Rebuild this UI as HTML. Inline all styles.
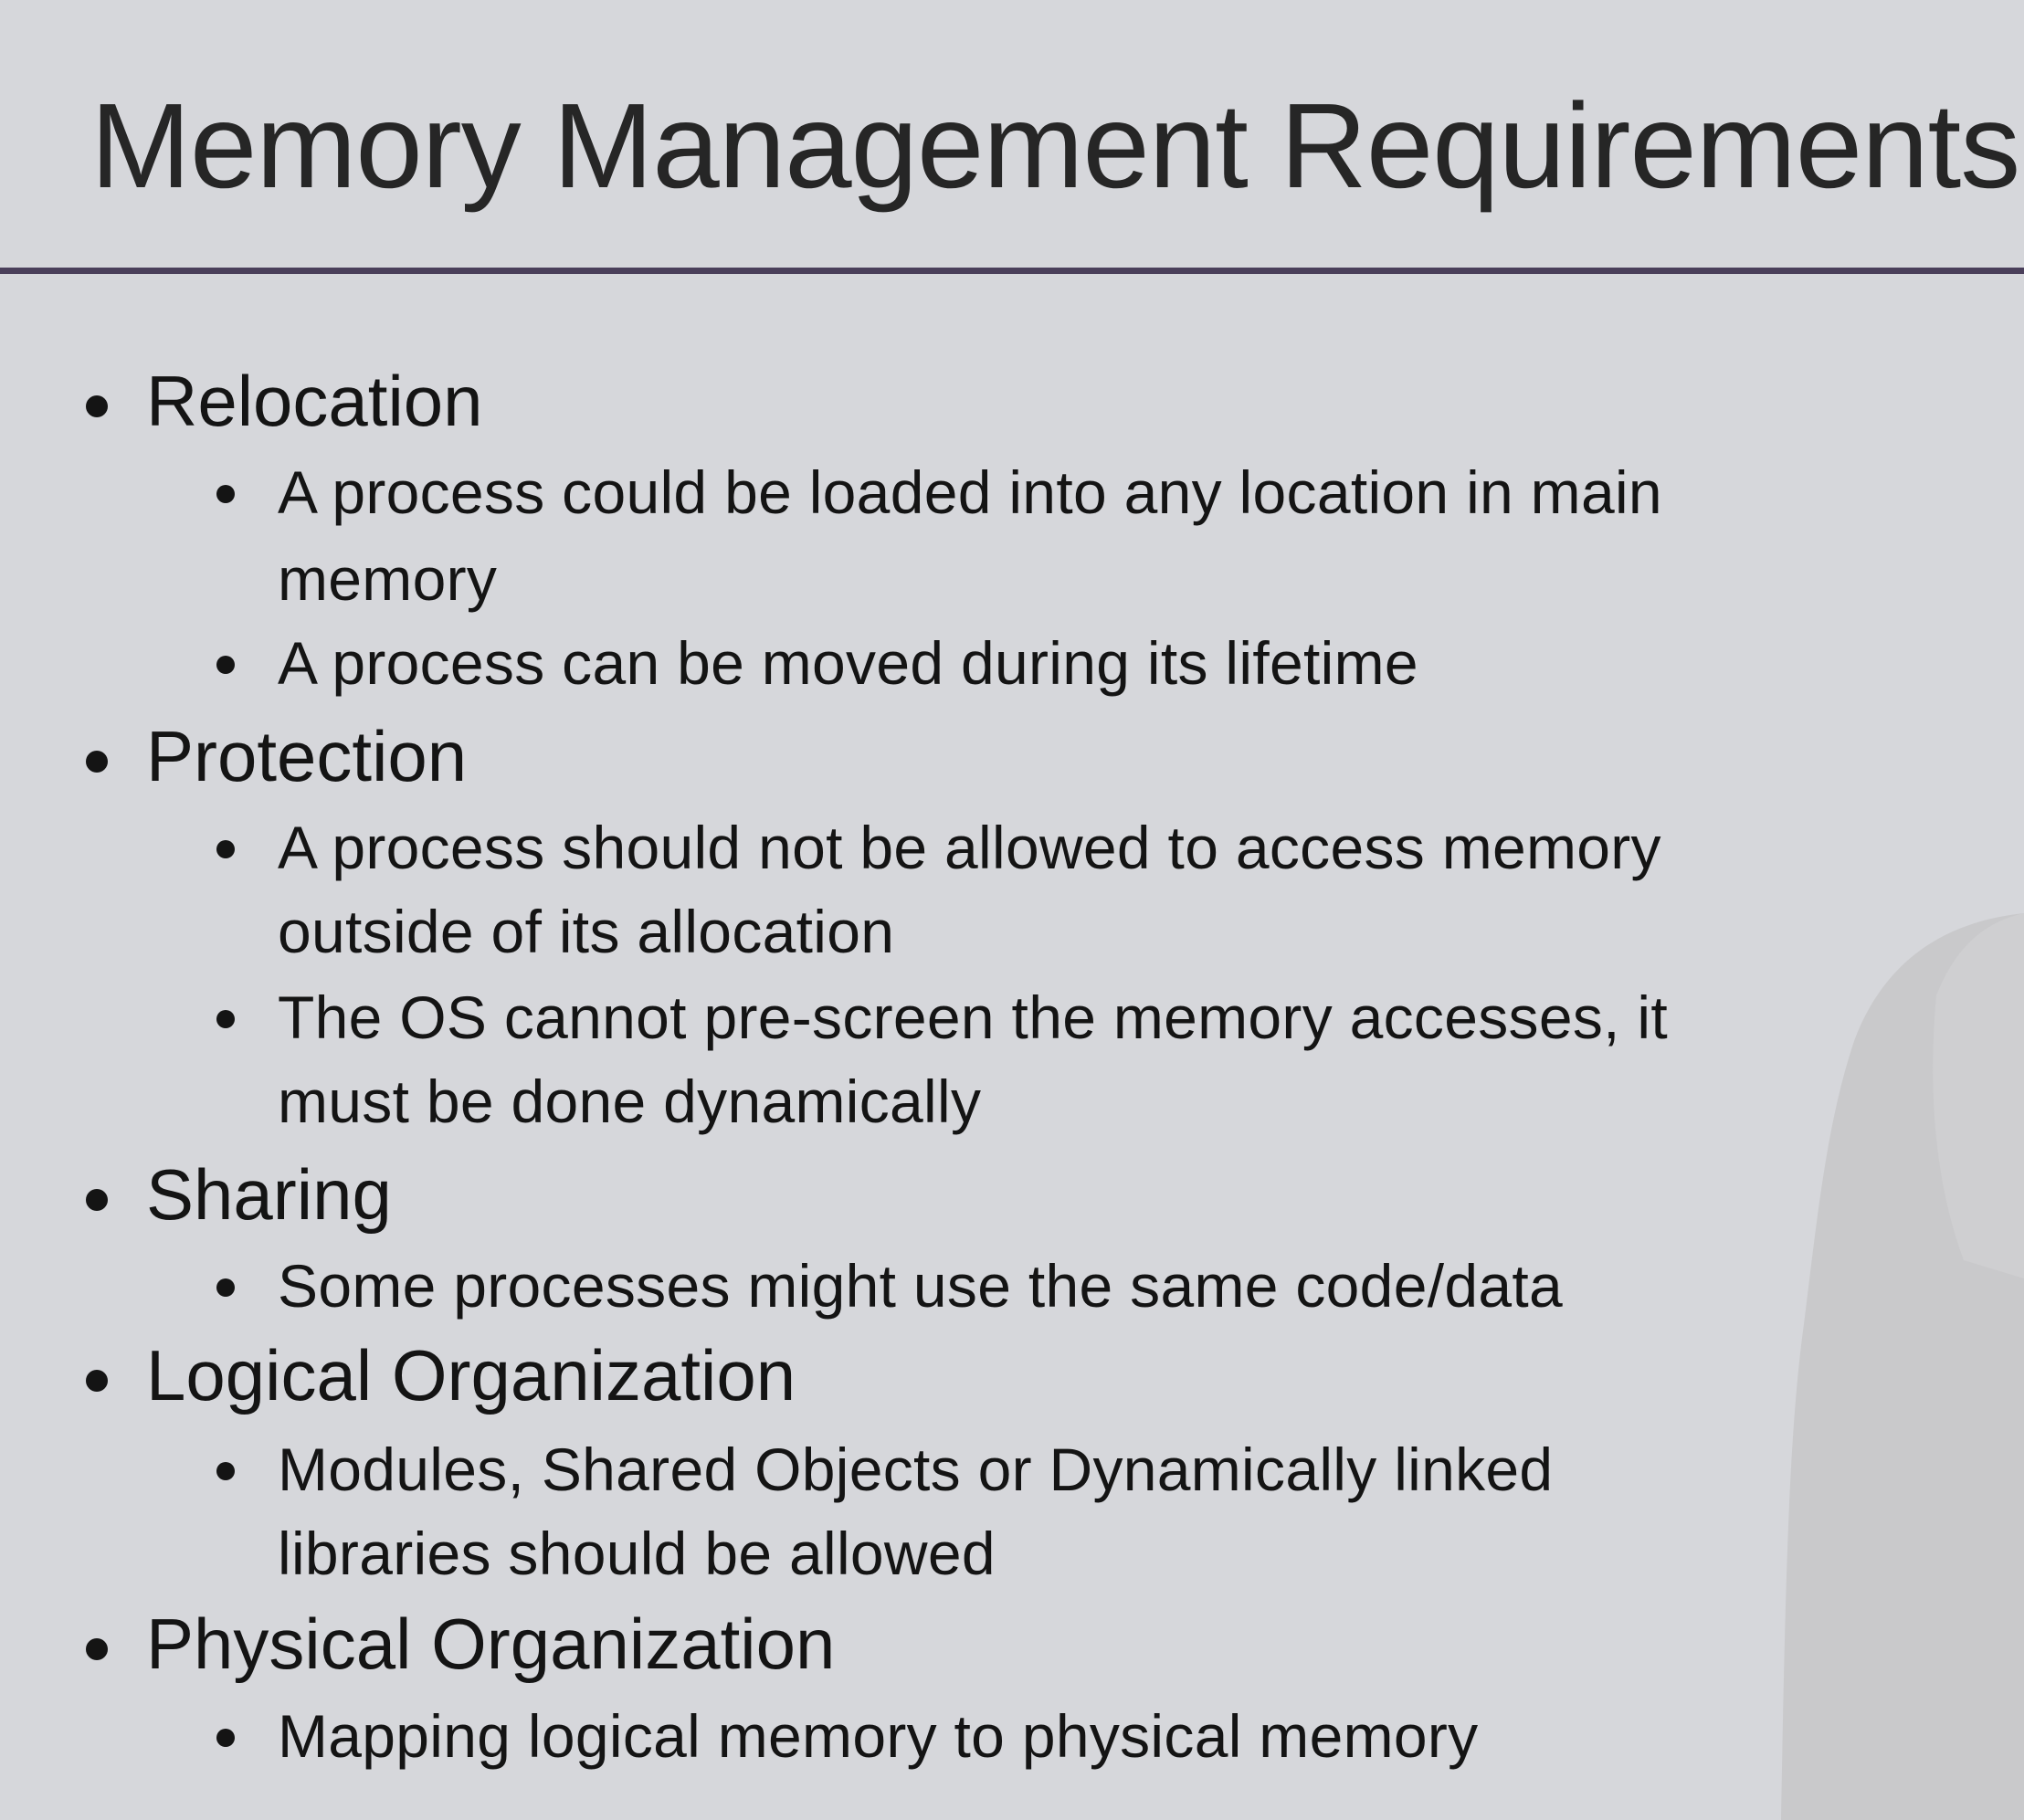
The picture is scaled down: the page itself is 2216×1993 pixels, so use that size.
<!DOCTYPE html>
<html><head><meta charset="utf-8"><style>
html,body{margin:0;padding:0}
body{width:2216px;height:1993px;background:#d6d7db;position:relative;overflow:hidden;font-family:"Liberation Sans",sans-serif;color:#141414}
.t{position:absolute;white-space:nowrap;line-height:1}
.l1{font-size:78px;left:160px}
.l2{font-size:66px;left:304px;letter-spacing:0.3px}
.d{position:absolute;border-radius:50%;background:#141414}
</style></head><body>
<svg style="position:absolute;left:0;top:0" width="2216" height="1993">
<path d="M2216 1000 C2120 1010 2060 1060 2030 1140 C2000 1230 1990 1330 1975 1450 C1960 1560 1955 1700 1950 1993 L2216 1993 Z" fill="#c9c9cb"/>
<path d="M2216 1000 C2170 1010 2140 1040 2120 1090 C2110 1200 2120 1300 2150 1380 L2216 1400 Z" fill="#cfcfd1"/>
</svg>
<div class="t" style="font-size:132px;left:99px;top:94px;letter-spacing:-1px;color:#262626">Memory Management Requirements</div>
<div style="position:absolute;left:0;top:293px;width:2216px;height:7px;background:#4a3f5a"></div>

<div class="t l1" style="top:400px">Relocation</div>
<div class="t l2" style="top:506px">A process could be loaded into any location in main</div>
<div class="t l2" style="top:601px">memory</div>
<div class="t l2" style="top:693px">A process can be moved during its lifetime</div>
<div class="t l1" style="top:789px">Protection</div>
<div class="t l2" style="top:895px">A process should not be allowed to access memory</div>
<div class="t l2" style="top:987px">outside of its allocation</div>
<div class="t l2" style="top:1081px">The OS cannot pre-screen the memory accesses, it</div>
<div class="t l2" style="top:1173px">must be done dynamically</div>
<div class="t l1" style="top:1269px">Sharing</div>
<div class="t l2" style="top:1375px">Some processes might use the same code/data</div>
<div class="t l1" style="top:1467px">Logical Organization</div>
<div class="t l2" style="top:1576px">Modules, Shared Objects or Dynamically linked</div>
<div class="t l2" style="top:1668px">libraries should be allowed</div>
<div class="t l1" style="top:1761px">Physical Organization</div>
<div class="t l2" style="top:1868px">Mapping logical memory to physical memory</div>

<div class="d" style="left:94px;top:433px;width:24px;height:24px"></div>
<div class="d" style="left:237px;top:531px;width:20px;height:20px"></div>
<div class="d" style="left:237px;top:718px;width:20px;height:20px"></div>
<div class="d" style="left:94px;top:822px;width:24px;height:24px"></div>
<div class="d" style="left:237px;top:920px;width:20px;height:20px"></div>
<div class="d" style="left:237px;top:1106px;width:20px;height:20px"></div>
<div class="d" style="left:94px;top:1302px;width:24px;height:24px"></div>
<div class="d" style="left:237px;top:1400px;width:20px;height:20px"></div>
<div class="d" style="left:94px;top:1500px;width:24px;height:24px"></div>
<div class="d" style="left:237px;top:1601px;width:20px;height:20px"></div>
<div class="d" style="left:94px;top:1794px;width:24px;height:24px"></div>
<div class="d" style="left:237px;top:1893px;width:20px;height:20px"></div>
</body></html>
